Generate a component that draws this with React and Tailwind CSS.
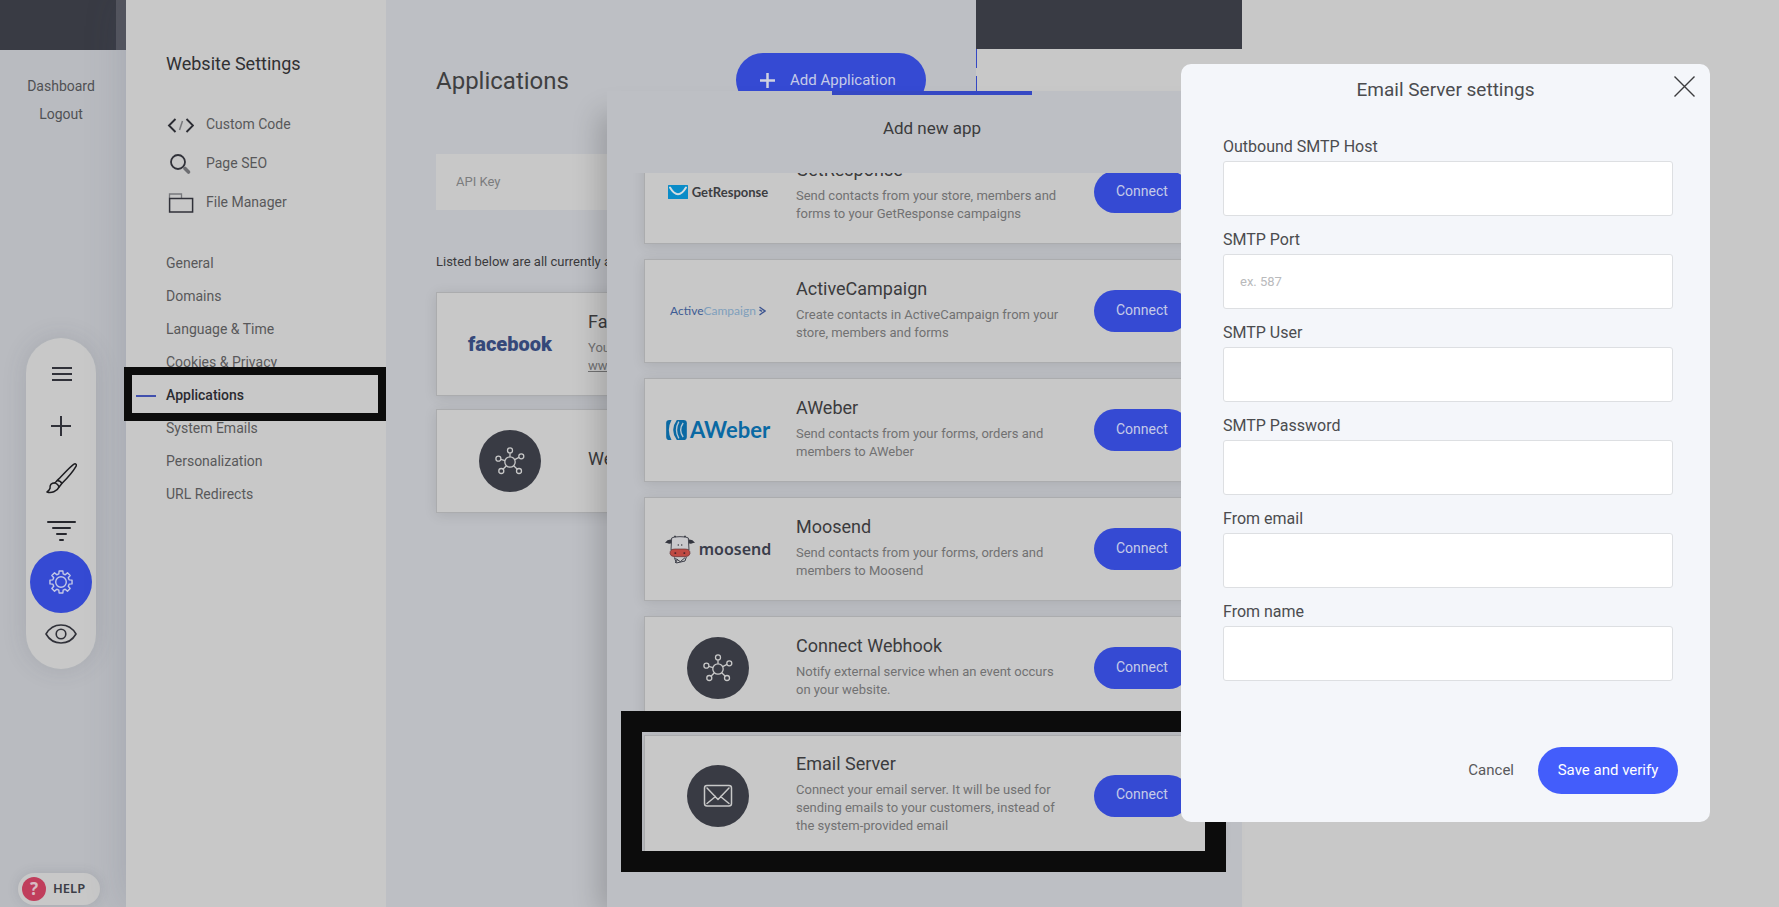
import React from "react";

const gearPoints = Array.from({ length: 8 }, (_, i) => {
  const base = (i * Math.PI) / 4 - Math.PI / 2;
  return [
    [-0.26, 8.4],
    [-0.17, 11.2],
    [0.17, 11.2],
    [0.26, 8.4],
  ]
    .map(([a, r]) => `${(r * Math.cos(base + a)).toFixed(2)},${(r * Math.sin(base + a)).toFixed(2)}`)
    .join(" ");
}).join(" ");

function GearIcon() {
  return (
    <svg width="26" height="26" viewBox="-13 -13 26 26" fill="none" stroke="#c3c8e6" strokeWidth="1.4" strokeLinejoin="round" aria-hidden="true">
      <polygon points={gearPoints} />
      <circle r="5.3" />
    </svg>
  );
}

function MenuIcon() {
  return (
    <svg width="22" height="16" viewBox="0 0 22 16" stroke="#303139" strokeWidth="2" aria-hidden="true">
      <path d="M2 2h20M2 8h20M2 14h20" />
    </svg>
  );
}

function PlusIcon() {
  return (
    <svg width="20" height="20" viewBox="0 0 20 20" stroke="#303139" strokeWidth="2" aria-hidden="true">
      <path d="M0 10h20M10 0v20" />
    </svg>
  );
}

function BrushIcon() {
  return (
    <svg width="32" height="31" viewBox="-4 1 95 92" fill="none" stroke="#1d1d21" strokeWidth="4.5" strokeLinejoin="round" aria-hidden="true">
      <path d="M32 53C48 38 66 16 81 5c6-4 10 1 7 6C77 30 62 46 46 62" />
      <path d="M32 53l-6 7c5 2 10 7 12 12l8-10c-2-5-8-9-14-9z" />
      <path d="M26 60c-12 0-16 6-15 16-2 6-6 9-9 11 12 4 30-1 36-15" />
    </svg>
  );
}

function FilterIcon() {
  return (
    <svg width="30" height="22" viewBox="0 0 30 22" stroke="#26272d" strokeWidth="2" strokeLinecap="round" aria-hidden="true">
      <path d="M2 3h27M7 9h17M11 15h9M14 21h3" />
    </svg>
  );
}

function EyeIcon() {
  return (
    <svg width="32" height="20" viewBox="-16 -10 32 20" fill="none" stroke="#303139" strokeWidth="1.6" strokeLinejoin="round" aria-hidden="true">
      <path d="M-15 0C-8 -12 8 -12 15 0C8 12 -8 12 -15 0Z" />
      <circle r="4.8" />
    </svg>
  );
}

function CodeIcon() {
  return (
    <svg width="28" height="16" viewBox="0 0 28 16" fill="none" aria-hidden="true">
      <path d="M9.500 2L3 8.500L9.500 15M20.500 2L27 8.500L20.500 15" stroke="#2b2c33" strokeWidth="1.900" />
      <path d="M16.500 4L13.500 13" stroke="#77787c" strokeWidth="1.500" />
    </svg>
  );
}

function SearchIcon() {
  return (
    <svg width="28" height="22" viewBox="0 0 28 22" fill="none" aria-hidden="true">
      <circle cx="12" cy="9" r="7" stroke="#303139" strokeWidth="1.800" />
      <path d="M19 15.500l3.500 3.500" stroke="#6d6e72" strokeWidth="3.600" strokeLinecap="round" />
    </svg>
  );
}

function FolderIcon() {
  return (
    <svg width="28" height="20" viewBox="0 0 28 20" fill="none" aria-hidden="true">
      <path d="M3.500 5V1H15.500V5" stroke="#77787c" strokeWidth="1.300" />
      <rect x="3.600" y="5.500" width="23" height="13.500" stroke="#303139" strokeWidth="1.500" />
    </svg>
  );
}

function RoundBadge({ children }) {
  return <div className="flex size-[62px] items-center justify-center rounded-full bg-[#393b44]">{children}</div>;
}

function WebhookLogo() {
  return (
    <RoundBadge>
      <svg width="32" height="32" viewBox="-16 -17 32 32" fill="none" stroke="#c8c8c8" strokeWidth="1.300" aria-hidden="true">
        <circle r="5.200" />
        <circle cx="0" cy="-11.600" r="2.500" />
        <circle cx="11.300" cy="-5.700" r="2.500" />
        <circle cx="-11.600" cy="-3.300" r="2.500" />
        <circle cx="-8.700" cy="9" r="2.500" />
        <circle cx="9" cy="9" r="2.500" />
        <path d="M0-5.200V-9.100M4.700-2.400L9-4.600M-5-1.400L-9.200-2.600M-3.600 3.700L-7 7.200M3.700 3.700L7.300 7.200" />
      </svg>
    </RoundBadge>
  );
}

function EmailLogo() {
  return (
    <RoundBadge>
      <svg width="30" height="24" viewBox="0 0 30 24" fill="none" stroke="#c8c8c8" strokeWidth="1.500" strokeLinejoin="round" aria-hidden="true">
        <rect x="1.500" y="1.500" width="27" height="20.500" rx="2.500" />
        <path d="M4 4l11 11.500L26 4M4 19.500l8.500-7M26 19.500l-8.500-7" strokeLinecap="round" />
      </svg>
    </RoundBadge>
  );
}

function FacebookLogo() {
  return <span className="text-[20px] leading-6 font-black text-[#35487a]">facebook</span>;
}

function GetResponseLogo() {
  return (
    <div className="flex items-center gap-1">
      <svg width="20" height="14" viewBox="0 0 20 14" aria-hidden="true">
        <rect width="20" height="14" rx="0.500" fill="#0a8cc8" />
        <path d="M2 2.500Q10 16 18 2.500" fill="none" stroke="#d4dde2" strokeWidth="2" strokeLinecap="round" />
      </svg>
      <span className="font-[Lato] text-[13px] leading-4 font-bold text-[#3c3d41]">GetResponse</span>
    </div>
  );
}

function ActiveCampaignLogo() {
  return (
    <div className="flex items-center gap-[3px] font-[Lato] text-[12px] leading-4">
      <span className="text-[#3d5c94]">
        Active<span className="text-[#7f9fbc]">Campaign</span>
      </span>
      <svg width="7" height="10" viewBox="0 0 7 10" fill="none" stroke="#3d5591" strokeWidth="1.400" aria-hidden="true">
        <path d="M0.500 1L6 5L0.500 9M0.500 3.800L3 5.300" />
      </svg>
    </div>
  );
}

function AWeberLogo() {
  return (
    <div className="flex items-center gap-[3px]">
      <svg width="21" height="20" viewBox="0 0 62 60" aria-hidden="true">
        <path d="M16 0H10Q0 0 0 10V50Q0 60 10 60H16Q8 45 8 30Q8 15 16 0Z" fill="#0a69a3" />
        <path d="M32 0H52Q62 0 62 10V50Q62 60 52 60H32Q21 45 21 30Q21 15 32 0Z" fill="#0a69a3" />
        <path d="M38 5Q24 30 38 55M51 9Q36 30 51 51" fill="none" stroke="#b4c6d2" strokeWidth="4" />
      </svg>
      <span className="font-[Lato] text-[22px] leading-6 font-bold text-[#0a69a3]">AWeber</span>
    </div>
  );
}

function MoosendLogo() {
  return (
    <div className="flex items-center gap-1">
      <svg width="30" height="29" viewBox="0 0 90 87" aria-hidden="true">
        <path d="M0 23Q8 12 20 14L22 24Q12 29 6 24Z" fill="#34363f" />
        <path d="M90 23Q82 12 70 14L68 24Q78 29 84 24Z" fill="#34363f" />
        <path d="M20 9Q24 5 45 5Q66 5 70 9L72 45H18Z" fill="#c9c9cc" stroke="#44464f" strokeWidth="3" />
        <path d="M30 2v5M60 2v5" stroke="#34363f" strokeWidth="5" />
        <path d="M38 30h4M48 30h4" stroke="#55565c" strokeWidth="4" />
        <path d="M15 56Q14 42 30 42H60Q76 42 75 56Q73 65 60 65H30Q17 65 15 56Z" fill="#c04a42" stroke="#5e3338" strokeWidth="2" />
        <path d="M31 52v5M58 52v5" stroke="#50262b" strokeWidth="5" />
        <path d="M28 67L34 84L60 78L64 66M31 70L46 80L60 68M31 84L38 72" fill="none" stroke="#3c3e48" strokeWidth="3" />
      </svg>
      <span className="font-['Noto_Sans'] text-[16px] leading-6 font-semibold text-[#3a3d4b]">moosend</span>
    </div>
  );
}

function AppCard({ logo, title, children, connect }) {
  return (
    <li className="flex min-h-[104px] items-center border border-[#abacae] bg-[#c8c8c8] shadow-[0_2px_12px_rgba(0,0,0,0.10)]">
      <div className="flex w-[146px] shrink-0 justify-center">{logo}</div>
      <div className="ml-[5px] w-[268px] shrink-0 pt-4 pb-5">
        <h3 className="text-[18px] leading-6 text-[#3b3b3d]">{title}</h3>
        {children && <p className="mt-[5px] text-[13px] leading-[18px] text-[#717172]">{children}</p>}
      </div>
      {connect && (
        <button type="button" className="ml-[30px] h-[42px] shrink-0 rounded-full bg-[#354ad3] px-[22px] pb-[2px] text-[14px] text-[#c5cae8]">
          Connect
        </button>
      )}
    </li>
  );
}

const tools = [
  ["Menu", MenuIcon],
  ["Add", PlusIcon],
  ["Design", BrushIcon],
  ["Filter", FilterIcon],
  ["Settings", GearIcon],
  ["Preview", EyeIcon],
];

function ToolRail() {
  return (
    <div className="flex w-[126px] shrink-0 flex-col items-center bg-[#b9bbc0]">
      <div className="h-[50px] w-full shrink-0 border-r-[10px] border-[#54555e] bg-[#393b44]" />
      <nav className="mt-[22px] flex w-full flex-col pr-1 text-center text-[14px] leading-7 text-[#505154]">
        <a href="#dashboard">Dashboard</a>
        <a href="#logout">Logout</a>
      </nav>
      <div className="mt-[210px] mr-1 flex w-[70px] flex-col items-center rounded-full bg-[#c8c8c8] pt-[10px] pb-[9px] shadow-[0_0_24px_rgba(60,65,80,0.15)]">
        {tools.map(([name, Icon]) =>
          name === "Settings" ? (
            <button key={name} type="button" aria-label={name} className="-my-[5px] flex size-[62px] items-center justify-center rounded-full bg-[#354ad3]">
              <Icon />
            </button>
          ) : (
            <button key={name} type="button" aria-label={name} className="flex h-[52px] w-full items-center justify-center">
              <Icon />
            </button>
          )
        )}
      </div>
      <button type="button" className="mt-auto mr-2 mb-[2px] flex h-8 w-[82px] shrink-0 items-center gap-[7px] rounded-full bg-[#c8c8c8] pl-1 font-['Noto_Sans'] text-[13px] font-semibold text-[#3c3e47] shadow-[0_0_12px_rgba(60,65,80,0.15)]">
        <span className="flex size-6 items-center justify-center rounded-full bg-[#c03e5c] text-[17px] font-bold text-[#d8bcc4]">?</span>
        HELP
      </button>
    </div>
  );
}

const shortcuts = [
  ["Custom Code", CodeIcon],
  ["Page SEO", SearchIcon],
  ["File Manager", FolderIcon],
];

const sections = ["General", "Domains", "Language & Time", "Cookies & Privacy", "Applications", "System Emails", "Personalization", "URL Redirects"];

function SettingsSidebar() {
  return (
    <nav className="relative z-10 w-[260px] shrink-0 bg-[#c8c8c8] pt-[50px] shadow-[0_0_40px_rgba(70,80,105,0.2)]">
      <h2 className="px-10 text-[18px] leading-7 text-[#303032]">Website Settings</h2>
      <ul className="mt-[27px] text-[14px] leading-[39px] text-[#58585a]">
        {shortcuts.map(([name, Icon]) => (
          <li key={name}>
            <a href="#shortcut" className="flex items-center gap-3 px-10">
              <Icon />
              {name}
            </a>
          </li>
        ))}
      </ul>
      <ul className="mt-[25px] text-[14px] leading-[33px] text-[#58585a]">
        {sections.map((name) =>
          name === "Applications" ? (
            <li key={name} className="relative z-10">
              <a href="#applications" aria-current="page" className="flex items-center gap-[10px] pl-[10px] font-medium text-[#2b2b31]">
                <span className="h-[2px] w-5 bg-[#4150ad]" />
                {name}
              </a>
              <span className="pointer-events-none absolute -top-3 right-0 -bottom-[9px] -left-[2px] border-8 border-[#0c0c0c]" />
            </li>
          ) : (
            <li key={name}>
              <a href="#section" className="block px-10">
                {name}
              </a>
            </li>
          )
        )}
      </ul>
    </nav>
  );
}

function ApplicationsPanel() {
  return (
    <main className="relative z-10 w-[590px] shrink-0 bg-[#bdbfc4] px-[50px] pt-[53px]">
      <div className="flex items-center justify-between">
        <h1 className="pt-[2px] text-[24px] text-[#3f3f41]">Applications</h1>
        <button type="button" className="flex h-[54px] w-[190px] items-center gap-[15px] rounded-full bg-[#354ad3] pl-6 text-[15px] text-[#c5cae8]">
          <svg width="15" height="15" viewBox="0 0 15 15" stroke="#d0d2e0" strokeWidth="2.500" aria-hidden="true">
            <path d="M0 7.500h15M7.500 0v15" />
          </svg>
          Add Application
        </button>
      </div>
      <input
        type="text"
        aria-label="API Key"
        placeholder="API Key"
        className="mt-[47px] block h-14 w-full bg-[#c8c8c8] px-5 pb-[2px] text-[13px] placeholder:text-[#7b7c7e]"
      />
      <p className="mt-[42px] truncate text-[13px] leading-5 text-[#3a3a3c]">Listed below are all currently active applications</p>
      <ul className="mt-5 flex flex-col gap-[13px]">
        <AppCard logo={<FacebookLogo />} title="Facebook">
          You
          <br />
          <a href="#facebook" className="underline">
            www
          </a>
        </AppCard>
        <AppCard logo={<WebhookLogo />} title="Webhook" />
      </ul>
    </main>
  );
}

const catalog = [
  ["GetResponse", GetResponseLogo, "Send contacts from your store, members and forms to your GetResponse campaigns"],
  ["ActiveCampaign", ActiveCampaignLogo, "Create contacts in ActiveCampaign from your store, members and forms"],
  ["AWeber", AWeberLogo, "Send contacts from your forms, orders and members to AWeber"],
  ["Moosend", MoosendLogo, "Send contacts from your forms, orders and members to Moosend"],
  ["Connect Webhook", WebhookLogo, "Notify external service when an event occurs on your website."],
  ["Email Server", EmailLogo, "Connect your email server. It will be used for sending emails to your customers, instead of the system-provided email"],
];

function AddAppPanel() {
  return (
    <section className="absolute top-[91px] bottom-0 left-[607px] z-20 flex w-[635px] flex-col bg-[#bdbfc4] shadow-[-16px_14px_26px_-8px_rgba(0,0,0,0.18)]">
      <header className="flex h-[82px] shrink-0 flex-col items-center pl-[15px]">
        <div className="h-1 w-[200px] bg-[#3548c4]" />
        <h2 className="mt-[21px] text-[17px] leading-6 text-[#3b3b3d]">Add new app</h2>
      </header>
      <div className="min-h-0 flex-1 overflow-hidden">
        <ul className="-mt-[33px] mr-[22px] ml-[37px] flex flex-col gap-[15px]">
          {catalog.map(([name, Logo, text]) => (
            <AppCard key={name} logo={<Logo />} title={name} connect>
              {text}
            </AppCard>
          ))}
        </ul>
      </div>
      <div className="pointer-events-none absolute right-4 bottom-[35px] left-[14px] h-[161px] border-[21px] border-[#0c0c0c]" />
    </section>
  );
}

const fields = [
  ["host", "Outbound SMTP Host", "text", ""],
  ["port", "SMTP Port", "text", "ex. 587"],
  ["user", "SMTP User", "text", ""],
  ["password", "SMTP Password", "password", ""],
  ["email", "From email", "email", ""],
  ["name", "From name", "text", ""],
];

function EmailServerDialog() {
  return (
    <form role="dialog" aria-labelledby="dialog-title" className="absolute top-16 right-[69px] z-30 w-[529px] rounded-[10px] bg-[#f4f6fa] pb-7 text-[#4b4c4f]">
      <h2 id="dialog-title" className="pt-[13px] text-center text-[19px] leading-[26px]">
        Email Server settings
      </h2>
      <button type="button" aria-label="Close" className="absolute top-[11px] right-[14px] p-[1px]">
        <svg width="21" height="21" viewBox="0 0 21 21" stroke="#3c3c3e" strokeWidth="1.400" aria-hidden="true">
          <path d="M0.500 0.500l20 20M20.500 0.500l-20 20" />
        </svg>
      </button>
      <div className="mt-[34px] mr-[37px] ml-[42px] flex flex-col gap-[14px]">
        {fields.map(([id, label, type, placeholder]) => (
          <div key={id}>
            <label htmlFor={id} className="mb-1 block text-[16px] leading-5">
              {label}
            </label>
            <input
              id={id}
              type={type}
              placeholder={placeholder}
              className="block h-[55px] w-full rounded-[3px] border border-[#dddfe2] bg-white px-4 text-[13px] placeholder:text-[#b9babc]"
            />
          </div>
        ))}
      </div>
      <div className="mt-[66px] mr-8 flex items-center justify-end gap-6 text-[15px]">
        <button type="button" className="text-[#58595c]">
          Cancel
        </button>
        <button type="submit" className="h-[47px] w-[140px] rounded-full bg-[#435dfb] text-white">
          Save and verify
        </button>
      </div>
    </form>
  );
}

export default function App() {
  return (
    <div className="relative flex h-screen overflow-hidden bg-[#c8c8c8] font-[Roboto,sans-serif]">
      <ToolRail />
      <SettingsSidebar />
      <ApplicationsPanel />
      <div className="flex-1">
        <div className="h-[49px] w-[266px] bg-[#393b44]" />
        <div className="h-[19px] w-px bg-[#3548c4]" />
        <div className="mt-2 h-4 w-px bg-[#3548c4]" />
      </div>
      <AddAppPanel />
      <EmailServerDialog />
    </div>
  );
}
